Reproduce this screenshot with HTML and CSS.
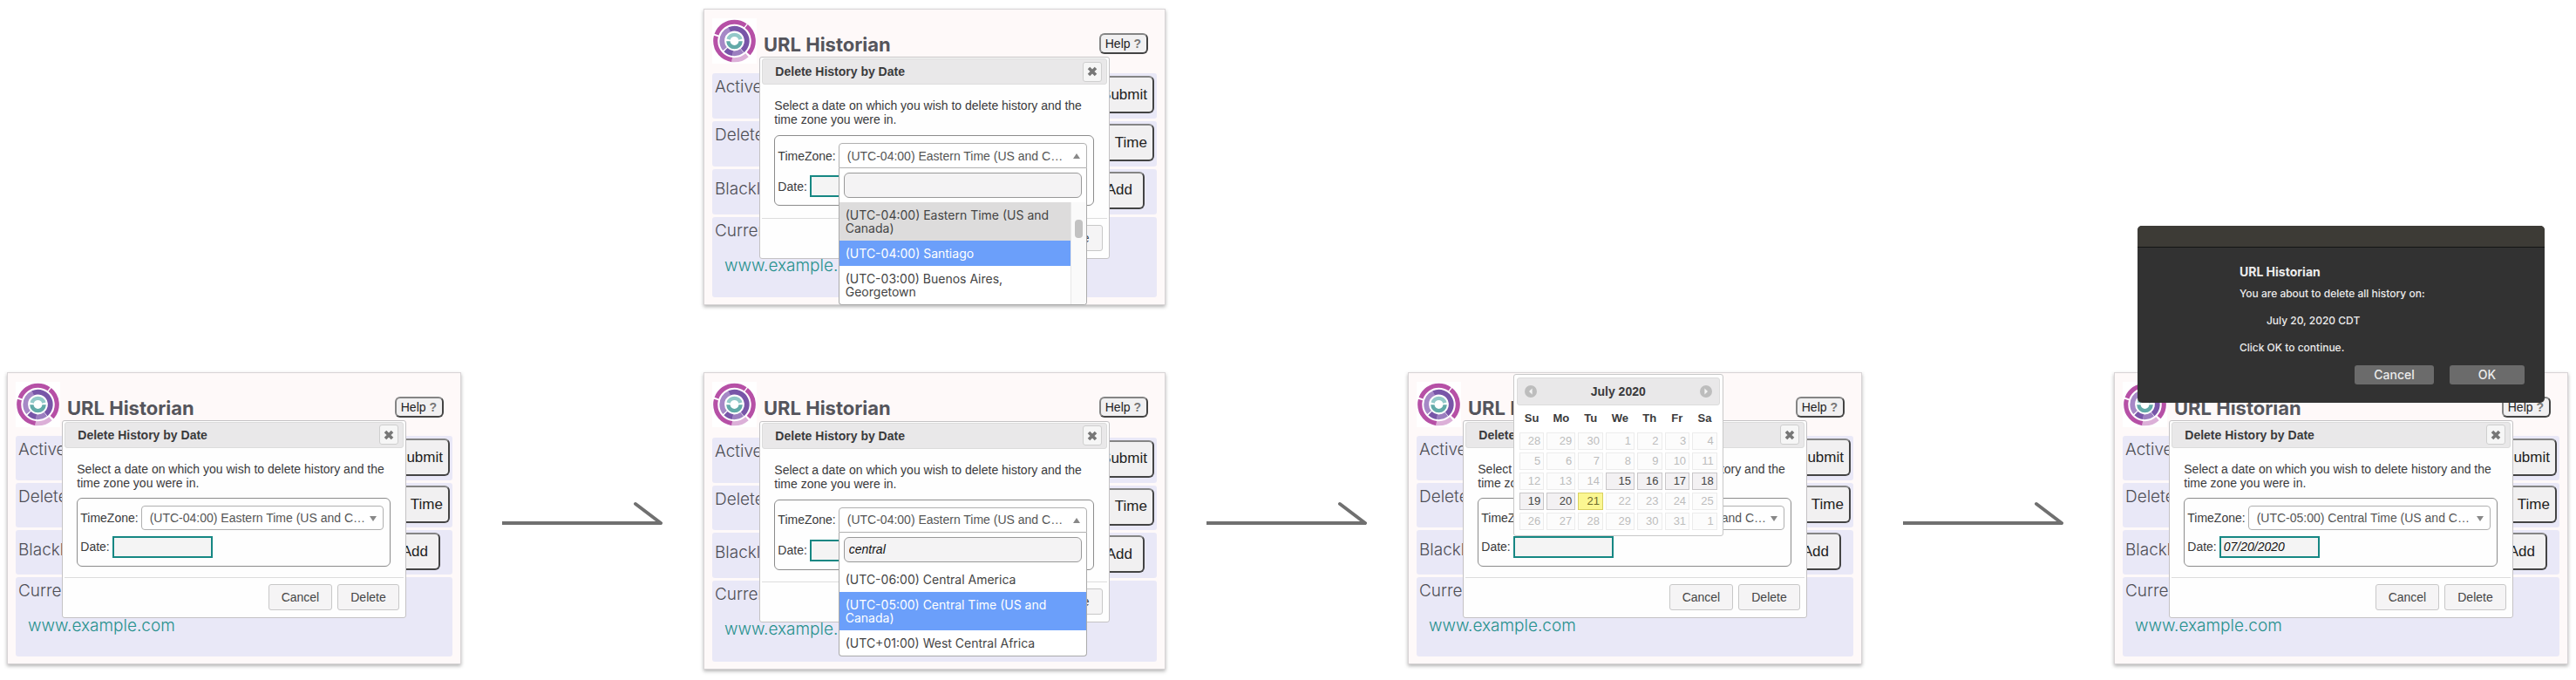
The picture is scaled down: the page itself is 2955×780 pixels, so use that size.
FILE: index.html
```html
<!DOCTYPE html>
<html lang="en">
<head>
<meta charset="utf-8">
<title>URL Historian – delete history by date</title>
<link rel="stylesheet" href="styles.css">
</head>
<body>
<svg class="sprite" aria-hidden="true">
  <symbol id="logo" viewBox="0 0 144 144">
    <g fill="none">
      <circle cx="72" cy="72" r="64" stroke="#b650a6" stroke-width="15" pathLength="360" stroke-dasharray="97 263" stroke-dashoffset="-97"/>
      <circle cx="72" cy="72" r="64" stroke="#b650a6" stroke-width="15" pathLength="360" stroke-dasharray="105 255" stroke-dashoffset="-199"/>
      <circle cx="72" cy="72" r="64" stroke="#b650a6" stroke-width="15" pathLength="360" stroke-dasharray="93 267" transform="rotate(-51 72 72)"/>
      <circle cx="72" cy="72" r="64" stroke="#dcb0d8" stroke-width="15" pathLength="360" stroke-dasharray="49 311" stroke-dashoffset="-48"/>
      <circle cx="72" cy="72" r="42" stroke="#a688c6" stroke-width="17" pathLength="360" stroke-dasharray="107 253" stroke-dashoffset="-139"/>
      <circle cx="72" cy="72" r="42" stroke="#7856a8" stroke-width="17" pathLength="360" stroke-dasharray="163 197" transform="rotate(-114 72 72)"/>
      <circle cx="72" cy="72" r="42" stroke="#9c7fc0" stroke-width="17" pathLength="360" stroke-dasharray="45 315" stroke-dashoffset="-52"/>
      <circle cx="72" cy="72" r="42" stroke="#7856a8" stroke-width="17" pathLength="360" stroke-dasharray="37 323" stroke-dashoffset="-97"/>
      <circle cx="72" cy="72" r="21" stroke="#93c9c9" stroke-width="13" pathLength="360" stroke-dasharray="150 210" stroke-dashoffset="-195"/>
      <circle cx="72" cy="72" r="21" stroke="#62aaa8" stroke-width="13" pathLength="360" stroke-dasharray="176 184" stroke-dashoffset="-2"/>
    </g>
  </symbol>
  <symbol id="cross" viewBox="0 0 12 12">
    <path d="M2 2 L10 10 M10 2 L2 10" fill="none" stroke="#777" stroke-width="3.6"/>
  </symbol>
  <symbol id="arrow" viewBox="0 0 184 30">
    <path d="M0 25 H182" fill="none" stroke="#707070" stroke-width="4"/>
    <path d="M153 3 L182 25" fill="none" stroke="#707070" stroke-width="4" stroke-linecap="round"/>
  </symbol>
</svg>

<main class="flow">

  <section class="card card-large step-pick">
    <header class="top">
      <svg class="logo"><use href="#logo"/></svg>
      <h2 class="brand">URL Historian</h2>
      <button class="raised help">Help <b>?</b></button>
    </header>
    <div class="panel"><span>Active</span><button class="raised">Submit</button></div>
    <div class="panel"><span>Delete</span><button class="raised time">Time</button></div>
    <div class="panel mid"><span>Blacklist</span><button class="raised add">Add</button></div>
    <div class="panel sites"><span>Current</span><a href="#">www.example.com</a></div>
    <div class="modal">
      <header class="modal-head"><h3>Delete History by Date</h3><button class="close" aria-label="Close"><svg><use href="#cross"/></svg></button></header>
      <div class="modal-body">
        <p>Select a date on which you wish to delete history and the time zone you were in.</p>
        <div class="fields">
          <div class="field"><label for="tz2">TimeZone:</label>
            <div class="combo open">
              <select id="tz2"><option>(UTC-04:00) Eastern Time (US and C…</option></select>
              <div class="drop">
                <input class="search" type="text" aria-label="Search time zones">
                <div class="scroller">
                  <ul class="list">
                    <li class="current">(UTC-04:00) Eastern Time (US and Canada)</li>
                    <li class="active">(UTC-04:00) Santiago</li>
                    <li>(UTC-03:00) Buenos Aires, Georgetown</li>
                  </ul>
                  <div class="track"><div class="thumb"></div></div>
                </div>
              </div>
            </div>
          </div>
          <div class="field"><label for="d2">Date:</label><div class="date"><input id="d2" type="text"></div></div>
        </div>
      </div>
      <footer class="modal-foot"><button>Cancel</button><button>Delete</button></footer>
    </div>
  </section>

  <section class="card step-start">
    <header class="top">
      <svg class="logo"><use href="#logo"/></svg>
      <h2 class="brand">URL Historian</h2>
      <button class="raised help">Help <b>?</b></button>
    </header>
    <div class="panel"><span>Active</span><button class="raised">Submit</button></div>
    <div class="panel"><span>Delete</span><button class="raised time">Time</button></div>
    <div class="panel mid"><span>Blacklist</span><button class="raised add">Add</button></div>
    <div class="panel sites"><span>Current</span><a href="#">www.example.com</a></div>
    <div class="modal">
      <header class="modal-head"><h3>Delete History by Date</h3><button class="close" aria-label="Close"><svg><use href="#cross"/></svg></button></header>
      <div class="modal-body">
        <p>Select a date on which you wish to delete history and the time zone you were in.</p>
        <div class="fields">
          <div class="field"><label for="tz1">TimeZone:</label>
            <div class="combo"><select id="tz1"><option>(UTC-04:00) Eastern Time (US and C…</option></select></div>
          </div>
          <div class="field"><label for="d1">Date:</label><div class="date"><input id="d1" type="text"></div></div>
        </div>
      </div>
      <footer class="modal-foot"><button>Cancel</button><button>Delete</button></footer>
    </div>
  </section>

  <svg class="arrow arrow-1" viewBox="0 0 184 30" aria-hidden="true"><use href="#arrow"/></svg>

  <section class="card card-large step-search">
    <header class="top">
      <svg class="logo"><use href="#logo"/></svg>
      <h2 class="brand">URL Historian</h2>
      <button class="raised help">Help <b>?</b></button>
    </header>
    <div class="panel"><span>Active</span><button class="raised">Submit</button></div>
    <div class="panel"><span>Delete</span><button class="raised time">Time</button></div>
    <div class="panel mid"><span>Blacklist</span><button class="raised add">Add</button></div>
    <div class="panel sites"><span>Current</span><a href="#">www.example.com</a></div>
    <div class="modal">
      <header class="modal-head"><h3>Delete History by Date</h3><button class="close" aria-label="Close"><svg><use href="#cross"/></svg></button></header>
      <div class="modal-body">
        <p>Select a date on which you wish to delete history and the time zone you were in.</p>
        <div class="fields">
          <div class="field"><label for="tz3">TimeZone:</label>
            <div class="combo open">
              <select id="tz3"><option>(UTC-04:00) Eastern Time (US and C…</option></select>
              <div class="drop">
                <input class="search" type="text" value="central" aria-label="Search time zones">
                <ul class="list">
                  <li>(UTC-06:00) Central America</li>
                  <li class="active">(UTC-05:00) Central Time (US and Canada)</li>
                  <li>(UTC+01:00) West Central Africa</li>
                </ul>
              </div>
            </div>
          </div>
          <div class="field"><label for="d3">Date:</label><div class="date"><input id="d3" type="text"></div></div>
        </div>
      </div>
      <footer class="modal-foot"><button>Cancel</button><button>Delete</button></footer>
    </div>
  </section>

  <svg class="arrow arrow-2" viewBox="0 0 184 30" aria-hidden="true"><use href="#arrow"/></svg>

  <section class="card step-date">
    <header class="top">
      <svg class="logo"><use href="#logo"/></svg>
      <h2 class="brand">URL Historian</h2>
      <button class="raised help">Help <b>?</b></button>
    </header>
    <div class="panel"><span>Active</span><button class="raised">Submit</button></div>
    <div class="panel"><span>Delete</span><button class="raised time">Time</button></div>
    <div class="panel mid"><span>Blacklist</span><button class="raised add">Add</button></div>
    <div class="panel sites"><span>Current</span><a href="#">www.example.com</a></div>
    <div class="modal">
      <header class="modal-head"><h3>Delete History by Date</h3><button class="close" aria-label="Close"><svg><use href="#cross"/></svg></button></header>
      <div class="modal-body">
        <p>Select a date on which you wish to delete history and the time zone you were in.</p>
        <div class="fields">
          <div class="field"><label for="tz4">TimeZone:</label>
            <div class="combo"><select id="tz4"><option>(UTC-04:00) Eastern Time (US and C…</option></select></div>
          </div>
          <div class="field"><label for="d4">Date:</label>
            <div class="date"><input id="d4" type="text">
              <div class="calendar">
                <div class="cal-head">
                  <button aria-label="Previous month"><svg viewBox="0 0 14 14"><circle cx="7" cy="7" r="7" fill="#bdbdbd"/><path d="M8.600 3.500 V10.500 L5 7 Z" fill="#f4f4f4"/></svg></button>
                  <strong>July 2020</strong>
                  <button aria-label="Next month"><svg viewBox="0 0 14 14"><circle cx="7" cy="7" r="7" fill="#bdbdbd"/><path d="M5.400 3.500 V10.500 L9 7 Z" fill="#f4f4f4"/></svg></button>
                </div>
                <table>
                  <thead><tr><th>Su</th><th class="wide">Mo</th><th>Tu</th><th class="wide">We</th><th>Th</th><th>Fr</th><th>Sa</th></tr></thead>
                  <tbody>
                    <tr><td>28</td><td>29</td><td>30</td><td>1</td><td>2</td><td>3</td><td>4</td></tr>
                    <tr><td>5</td><td>6</td><td>7</td><td>8</td><td>9</td><td>10</td><td>11</td></tr>
                    <tr><td>12</td><td>13</td><td>14</td><td class="on">15</td><td class="on">16</td><td class="on">17</td><td class="on">18</td></tr>
                    <tr><td class="on">19</td><td class="on">20</td><td class="today">21</td><td>22</td><td>23</td><td>24</td><td>25</td></tr>
                    <tr><td>26</td><td>27</td><td>28</td><td>29</td><td>30</td><td>31</td><td>1</td></tr>
                  </tbody>
                </table>
              </div>
            </div>
          </div>
        </div>
      </div>
      <footer class="modal-foot"><button>Cancel</button><button>Delete</button></footer>
    </div>
  </section>

  <svg class="arrow arrow-3" viewBox="0 0 184 30" aria-hidden="true"><use href="#arrow"/></svg>

  <section class="card step-confirm">
    <header class="top">
      <svg class="logo"><use href="#logo"/></svg>
      <h2 class="brand">URL Historian</h2>
      <button class="raised help">Help <b>?</b></button>
    </header>
    <div class="panel"><span>Active</span><button class="raised">Submit</button></div>
    <div class="panel"><span>Delete</span><button class="raised time">Time</button></div>
    <div class="panel mid"><span>Blacklist</span><button class="raised add">Add</button></div>
    <div class="panel sites"><span>Current</span><a href="#">www.example.com</a></div>
    <div class="modal">
      <header class="modal-head"><h3>Delete History by Date</h3><button class="close" aria-label="Close"><svg><use href="#cross"/></svg></button></header>
      <div class="modal-body">
        <p>Select a date on which you wish to delete history and the time zone you were in.</p>
        <div class="fields">
          <div class="field"><label for="tz5">TimeZone:</label>
            <div class="combo"><select id="tz5"><option>(UTC-05:00) Central Time (US and C…</option></select></div>
          </div>
          <div class="field"><label for="d5">Date:</label><div class="date"><input id="d5" type="text" value="07/20/2020"></div></div>
        </div>
      </div>
      <footer class="modal-foot"><button>Cancel</button><button>Delete</button></footer>
    </div>
    <div class="alert">
      <div class="alert-bar"></div>
      <div class="alert-body">
        <h3>URL Historian</h3>
        <p>You are about to delete all history on:</p>
        <p class="when">July 20, 2020 CDT</p>
        <p>Click OK to continue.</p>
      </div>
      <div class="alert-foot"><button>Cancel</button><button class="ok">OK</button></div>
    </div>
  </section>

</main>
</body>
</html>
```

FILE: styles.css
```css
* { box-sizing: border-box; }

body {
  margin: 0;
  background: #fff;
  color: #3a3a3c;
  font: 14px/16px "Liberation Sans", Arial, sans-serif;
}

h2, h3, p, ul { margin: 0; padding: 0; }
button, input, select { font: inherit; color: inherit; margin: 0; }
.sprite { display: none; }

/* Storyboard */
.flow {
  display: grid;
  grid-template-columns: 521fr 184fr 530fr 184fr 521fr 184fr 532fr;
  gap: 77px 47px;
  align-items: start;
  padding: 10px 9px 10px 8px;
}
.step-pick { grid-area: 1 / 3; }
.step-start { grid-area: 2 / 1; }
.step-search { grid-area: 2 / 3; }
.step-date { grid-area: 2 / 5; }
.step-confirm { grid-area: 2 / 7; margin-left: 11px; }
.arrow { width: 100%; margin-top: 148px; }
.arrow-1 { grid-area: 2 / 2; }
.arrow-2 { grid-area: 2 / 4; }
.arrow-3 { grid-area: 2 / 6; }

/* Extension popup */
.card {
  position: relative;
  display: flex;
  flex-direction: column;
  gap: 3px;
  aspect-ratio: 520 / 334;
  padding: 0 9px 8px;
  background: #fef9f9;
  border: 1px solid #d8d4d6;
  box-shadow: 0 2px 4px rgba(0, 0, 0, .3);
}
.top {
  display: flex;
  align-items: flex-start;
  flex: 69 0 0;
  min-height: 0;
}
.logo {
  width: 51px;
  height: 52px;
  margin-top: 10px;
  padding: 1px;
  background: #fff;
}
.brand {
  margin: 28px auto 0 8px;
  color: #55555c;
  font: 700 22px/24px Inter, "Liberation Sans", sans-serif;
}
.raised {
  height: 43px;
  padding: 0 6px;
  border: 2px solid #444;
  border-top-color: #858585;
  border-left-color: #858585;
  border-radius: 6px;
  background: #f1f0f1;
  color: #222;
  font-size: 17px;
  line-height: 20px;
}
.help {
  height: 24px;
  margin: 27px 10px 0 0;
  padding: 0 6px 0 5px;
  font-size: 14px;
}
.help b { color: #777; }
.panel {
  display: flex;
  align-items: flex-start;
  justify-content: space-between;
  flex: 51 0 0;
  min-height: 0;
  padding: 0 3px;
  border-radius: 3px;
  background: #e9e8f7;
  color: #4e4e55;
  font: 300 19px/24px Inter, "Liberation Sans", sans-serif;
}
.panel span { margin-top: 4px; }
.panel .raised {
  margin-top: 3px;
  font-family: "Liberation Sans", Arial, sans-serif;
  font-weight: 400;
}
.mid span { margin-top: 11px; }
.panel .time { padding-left: 60px; }
.panel .add { margin-right: 11px; padding: 0 12px; }
.sites { flex-direction: column; justify-content: flex-start; gap: 16px; flex-grow: 91; }
.sites a { margin-left: 11px; color: #27918e; text-decoration: none; }

/* Delete-history dialog */
.modal {
  position: absolute;
  left: 12%;
  top: 16%;
  width: 76%;
  height: 68.5%;
  display: flex;
  flex-direction: column;
  padding: 1px 2px;
  border: 1px solid #c4c2c4;
  border-radius: 3px;
  background: #fefefe;
}
.modal-head {
  display: flex;
  align-items: center;
  justify-content: space-between;
  height: 30px;
  padding: 0 5px 0 14px;
  border: 1px solid #dcdcdc;
  border-radius: 3px;
  background: #e9e8e9;
}
.modal-head h3 { font-size: 14px; line-height: 16px; }
.close {
  display: flex;
  align-items: center;
  justify-content: center;
  width: 22px;
  height: 23px;
  padding: 0;
  border: 1px solid #cfcfcf;
  border-radius: 3px;
  background: #f6f6f6;
}
.close svg { width: 12px; height: 12px; }
.modal-body { flex: 1; padding: 16px 15px 0 14px; }
.fields {
  display: flex;
  flex-direction: column;
  gap: 7px;
  margin-top: 9px;
  padding: 8px 7px 9px 3px;
  border: 1px solid #8c8c8c;
  border-radius: 6px;
}
.field { display: flex; align-items: center; gap: 3px; }
.combo { position: relative; flex: 1; }
.combo::after {
  content: "";
  position: absolute;
  right: 8px;
  top: 12px;
  border: 4px solid transparent;
  border-top: 6px solid #888;
  border-bottom: 0;
}
.open::after { border-top: 0; border-bottom: 6px solid #888; }
.combo select {
  display: block;
  width: 100%;
  height: 28px;
  padding: 0 9px;
  border: 1px solid #b0b0b0;
  border-radius: 4px;
  background: #fff;
  color: #555;
  appearance: none;
}
.combo.open select { height: 29px; border-radius: 4px 4px 0 0; }
.drop {
  position: absolute;
  left: 0;
  right: 0;
  top: 100%;
  z-index: 2;
  border: 1px solid #aaa;
  border-top: 0;
  border-radius: 0 0 4px 4px;
  background: #fff;
  overflow: hidden;
}
.search {
  display: block;
  width: calc(100% - 10px);
  height: 29px;
  margin: 5px;
  padding: 0 5px;
  border: 1px solid #999;
  border-radius: 6px;
  background: #f4f3f4;
  color: #111;
  font-style: italic;
}
.scroller { display: flex; }
.list {
  flex: 1;
  list-style: none;
  color: #444;
  font: 14px/15px Inter, "Liberation Sans", sans-serif;
}
.list li { padding: 7px; }
.list .current { background: #dddcdc; }
.list .active { background: #6b9ffa; color: #fff; }
.track {
  width: 18px;
  padding: 20px 4px 0;
  border-left: 1px solid #e8e8e8;
  background: #fafafa;
}
.thumb { height: 21px; border-radius: 4px; background: #c2c2c2; }
.date { position: relative; }
.date input {
  display: block;
  width: 115px;
  height: 25px;
  padding: 0 3px;
  border: 2px solid #168783;
  border-radius: 0;
  background: #f4f4f4;
  color: #111;
  font-style: italic;
}
.modal-foot {
  display: flex;
  justify-content: flex-end;
  gap: 6px;
  padding: 7px 5px;
  border-top: 1px solid #ddd;
}
.modal-foot button {
  height: 30px;
  padding: 0 14px;
  border: 1px solid #c8c8c8;
  border-radius: 3px;
  background: #f5f4f5;
  color: #454545;
}

/* Roomier rows for the wider cards */
.card-large .fields { gap: 8px; margin-top: 10px; }

/* Date picker */
.calendar {
  position: absolute;
  left: 0;
  bottom: 100%;
  z-index: 2;
  width: 241px;
  padding: 3px;
  border: 1px solid #c8c8c8;
  border-radius: 3px;
  background: #fff;
}
.cal-head {
  display: flex;
  align-items: center;
  justify-content: space-between;
  height: 32px;
  padding: 0 8px;
  border: 1px solid #dcdcdc;
  border-radius: 3px;
  background: #e9e8e9;
}
.cal-head button {
  padding: 0;
  border: 0;
  background: none;
  line-height: 0;
}
.cal-head svg { width: 14px; height: 14px; }
.calendar table {
  width: 100%;
  border-spacing: 3px;
  table-layout: fixed;
  font-size: 13px;
  line-height: 18px;
}
.calendar th { height: 25px; padding: 0; vertical-align: middle; }
.calendar .wide { width: 33px; }
.calendar td {
  padding: 0 3px;
  border: 1px solid #ececec;
  background: #fcfcfc;
  color: #bdbdbd;
  text-align: right;
}
.calendar .on { border-color: #c8c6c8; background: #f3f1f3; color: #444; }
.calendar .today { border-color: #d8d060; background: #fbf792; color: #6e6a2c; }

/* System confirmation */
.alert {
  position: absolute;
  left: 5%;
  bottom: 90%;
  z-index: 3;
  width: 90%;
  border-radius: 5px;
  background: #323232;
  color: #ececec;
  font: 500 12px/16px Inter, "Liberation Sans", sans-serif;
  overflow: hidden;
}
.alert-bar { height: 25px; border-bottom: 1px solid #141414; background: #3d3b36; }
.alert-body {
  display: flex;
  flex-direction: column;
  gap: 15px;
  padding: 20px 20px 0 117px;
}
.alert-body h3 { margin-bottom: -6px; font-size: 14px; line-height: 16px; }
.alert-body .when { padding-left: 31px; }
.alert-foot {
  display: flex;
  justify-content: flex-end;
  gap: 18px;
  padding: 12px 23px 21px;
}
.alert-foot button {
  width: 91px;
  height: 22px;
  padding: 0;
  border: 0;
  border-radius: 3px;
  background: #6b6b6b;
  font-size: 14px;
}
.alert-foot .ok { width: 86px; }
```
